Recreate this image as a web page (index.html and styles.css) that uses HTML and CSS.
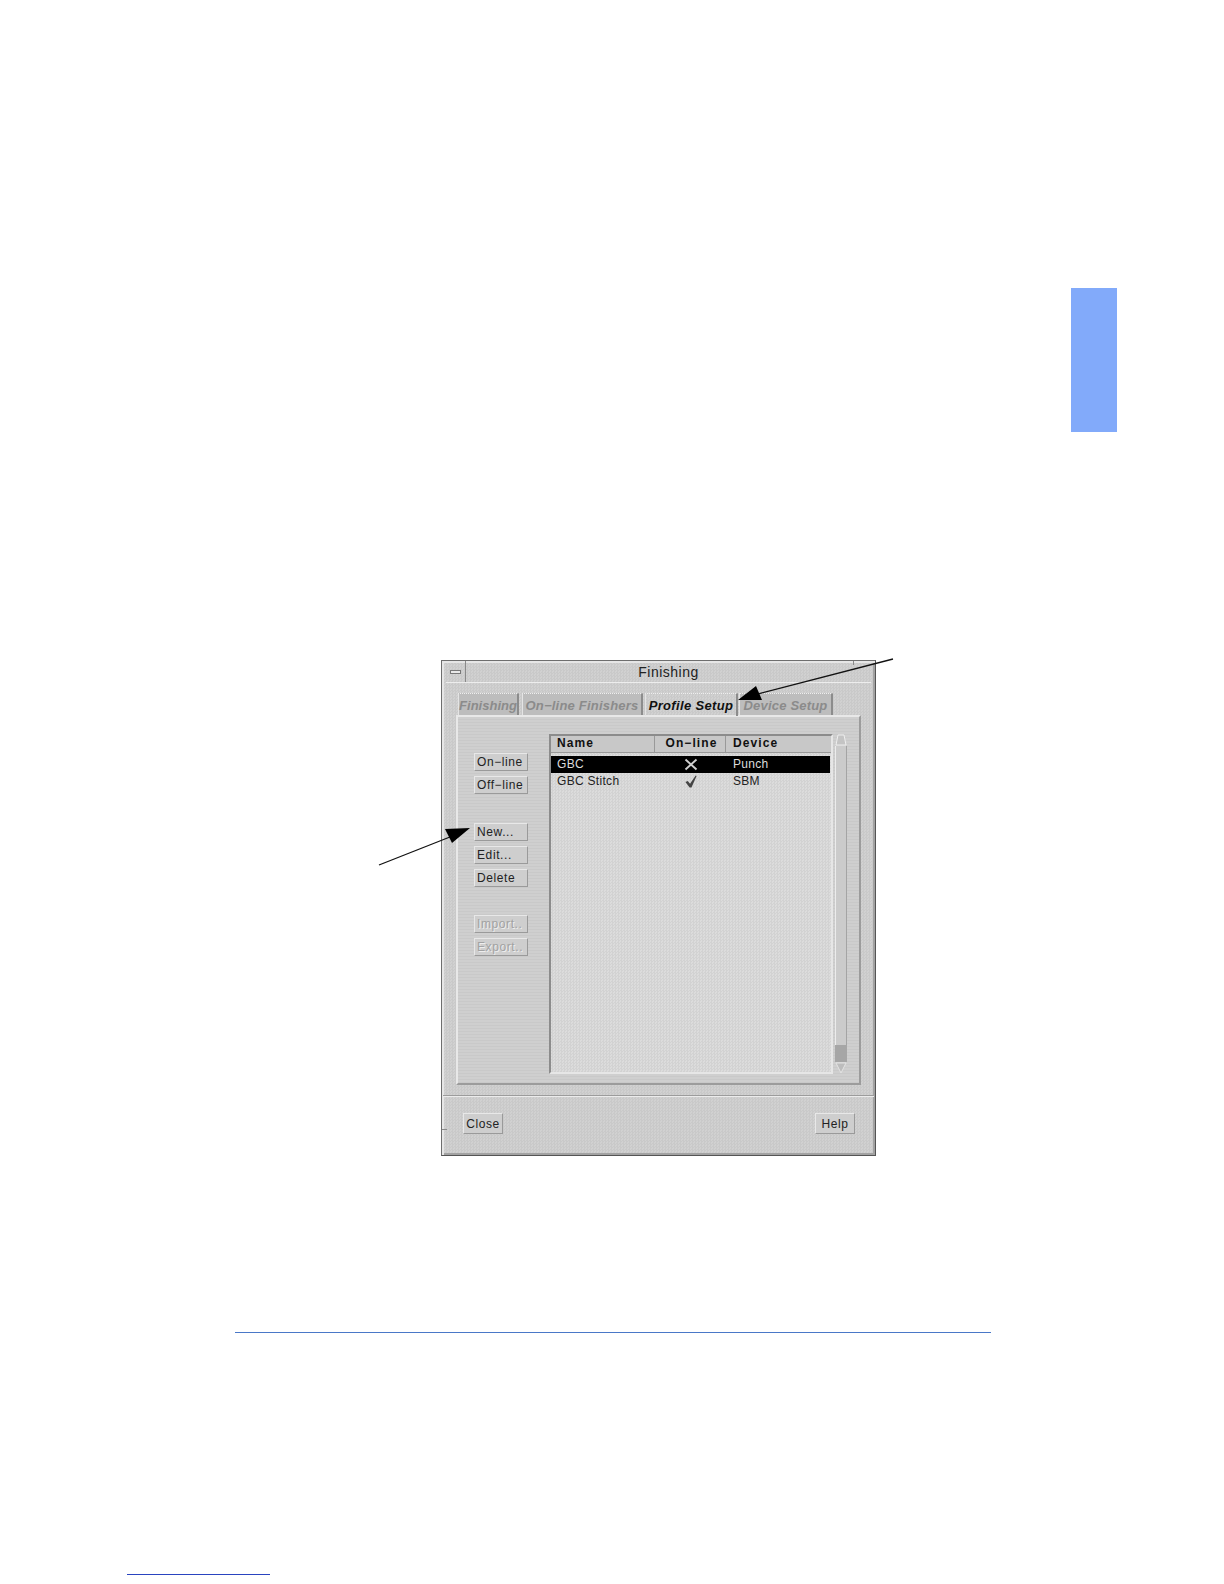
FILE: index.html
```html
<!DOCTYPE html>
<html lang="en">
<head>
<meta charset="utf-8">
<title>Finishing</title>
<link rel="stylesheet" href="styles.css">
</head>
<body>
<div class="page">
  <div class="side-tab"></div>
  <div class="dialog">
    <span class="tick tick-top"></span>
    <span class="tick tick-bottom"></span>
    <div class="titlebar">
      <div class="menu-btn"><span class="menu-dash"></span></div>
      <div class="title">Finishing</div>
    </div>
    <div class="tabs">
      <div class="tab off t1">Finishing</div>
      <div class="tab off t2">On&#8722;line Finishers</div>
      <div class="tab on t3">Profile Setup</div>
      <div class="tab off t4">Device Setup</div>
    </div>
    <div class="panel">
      <div class="actions">
        <div class="btn">On&#8722;line</div>
        <div class="btn">Off&#8722;line</div>
        <div class="btn gap">New...</div>
        <div class="btn">Edit...</div>
        <div class="btn">Delete</div>
        <div class="btn gap2 dis">Import..</div>
        <div class="btn dis">Export..</div>
      </div>
      <div class="list">
        <div class="row head">
          <div class="c1">Name</div><div class="c2">On&#8722;line</div><div class="c3">Device</div>
        </div>
        <div class="row sel">
          <div class="c1">GBC</div>
          <div class="c2"><svg class="ico" viewBox="0 0 14 12"><path d="M1.5 1 L12.5 11 M12.5 1 L1.5 11" stroke="#cfcfcf" stroke-width="1.9" fill="none"/></svg></div>
          <div class="c3">Punch</div>
        </div>
        <div class="row">
          <div class="c1">GBC Stitch</div>
          <div class="c2"><svg class="ico" viewBox="0 0 14 14"><path d="M1 7.5 L3.5 6.5 L6 9.5 L12 0.5 L13 1 L7.5 13.5 L5.5 13.5 Z" fill="#444"/></svg></div>
          <div class="c3">SBM</div>
        </div>
      </div>
      <div class="scroll">
        <svg class="arrow-btn" viewBox="0 0 12 12"><path d="M1 11 L3 1 L9 1 L11 11 Z" fill="#c4c4c4" stroke="#eee"/></svg>
        <div class="trough"></div>
        <div class="thumb"></div>
        <svg class="arrow-btn" viewBox="0 0 12 12"><path d="M1 1 L11 1 L6 11 Z" fill="#bdbdbd" stroke="#e4e4e4"/></svg>
      </div>
    </div>
    <div class="sep"></div>
    <div class="footer">
      <div class="btn wide">Close</div>
      <div class="btn wide">Help</div>
    </div>
  </div>
  <div class="rule"></div>
  <div class="foot-rule"></div>
  <svg class="arrows" viewBox="0 0 1224 1584">
    <path d="M893 659 L750 696" stroke="#111" stroke-width="1.3" fill="none"/>
    <path d="M738 700 L756 686 L762 700 Z" fill="#000"/>
    <path d="M379 865 L455 835" stroke="#111" stroke-width="1.3" fill="none"/>
    <path d="M470 828 L445 829 L452 843 Z" fill="#000"/>
  </svg>
</div>
</body>
</html>
```

FILE: styles.css
```css
* { box-sizing: border-box; }
html, body { margin: 0; padding: 0; background: #fff; }
.page {
  position: relative;
  width: 1224px;
  height: 1584px;
  overflow: hidden;
  padding-top: 288px;
  font-family: "Liberation Sans", Arial, sans-serif;
  color: #111;
}
.side-tab { width: 46px; height: 144px; margin-left: 1071px; background: #82aafa; }
.dialog {
  position: relative;
  width: 435px;
  height: 496px;
  margin: 228px 0 0 441px;
  border: 1px solid #6e6e6e;
  border-right-color: #555;
  border-bottom-color: #555;
  box-shadow: inset 2px 2px 0 #e6e6e6, inset -2px -2px 0 #a2a2a2;
  padding: 0 4px;
  background: repeating-conic-gradient(#c9c9c9 0 25%, #d1d1d1 0 50%) 0 0 / 3px 3px;
}
.tick { position: absolute; background: #8a8a8a; }
.tick-top { top: 0; right: 21px; width: 1px; height: 4px; }
.tick-bottom { left: 0; bottom: 25px; width: 5px; height: 1px; }
.titlebar {
  display: flex;
  height: 22px;
  border-bottom: 1px solid #ededed;
}
.menu-btn {
  width: 20px;
  display: flex;
  align-items: center;
  justify-content: center;
  border-right: 1px solid #8a8a8a;
}
.menu-dash { width: 11px; height: 4px; background: #e8e8e8; border: 1px solid #777; }
.title {
  flex: 1;
  text-align: center;
  font-size: 14px;
  line-height: 23px;
  letter-spacing: .5px;
  color: #222;
}
.tabs { display: flex; margin: 10px 0 0 12px; height: 22px; }
.tab {
  height: 22px;
  font-size: 13px;
  font-weight: bold;
  font-style: italic;
  line-height: 23px;
  text-align: center;
  white-space: nowrap;
  border-top: 1px dotted #eee;
  border-left: 1px solid #e4e4e4;
  border-right: 2px solid #8c8c8c;
  margin-right: 2px;
}
.tab.off { color: #8b8b8b; background: #bdbdbd; letter-spacing: .2px; }
.tab.on { color: #111; letter-spacing: .35px; }
.tab.t1 { width: 61px; margin-right: 3px; letter-spacing: 0; }
.t2 { width: 121px; }
.t3 { width: 93px; margin-right: 1px; height: 23px; }
.t4 { width: 94px; }
.panel {
  display: flex;
  align-items: flex-start;
  width: 405px;
  height: 370px;
  margin-left: 10px;
  padding: 17px 0 0 16px;
  border: 2px solid;
  border-color: #e8e8e8 #9c9c9c #9c9c9c #e8e8e8;
  background: repeating-linear-gradient(0deg, #c9c9c9 0 1px, #cfcfcf 1px 3px);
}
.actions { width: 54px; padding-top: 19px; margin-right: 21px; flex: none; }
.btn {
  width: 54px;
  height: 18px;
  margin-bottom: 5px;
  font-size: 12px;
  line-height: 17px;
  letter-spacing: .6px;
  padding-left: 2px;
  white-space: nowrap;
  background: #cecece;
  border: 1px solid;
  border-color: #e8e8e8 #9a9a9a #9a9a9a #e8e8e8;
  color: #222;
}
.btn.gap { margin-top: 29px; }
.btn.gap2 { margin-top: 28px; }
.btn.dis { color: #a2a2a2; text-shadow: 1px 1px 0 #eee; }
.list {
  width: 284px;
  height: 340px;
  flex: none;
  border: 2px solid;
  border-color: #8c8c8c #e6e6e6 #e6e6e6 #8c8c8c;
  background: repeating-conic-gradient(#d2d2d2 0 25%, #dcdcdc 0 50%) 0 0 / 3px 3px;
}
.row { display: flex; height: 17px; font-size: 12px; line-height: 17px; letter-spacing: .3px; color: #222; }
.head {
  height: 17px;
  margin-bottom: 3px;
  background: #c8c8c8;
  border-bottom: 1px solid #999;
  font-weight: bold;
  letter-spacing: 1.1px;
  line-height: 15px;
  color: #111;
}
.head .c1, .head .c2 { border-right: 1px solid #999; }
.head .c2 { padding-left: 3px; }
.head .c3 { flex: 1; }
.sel { background: #000; color: #dcdcdc; margin-right: 1px; }
.c1 { width: 104px; padding-left: 6px; }
.c2 { width: 71px; text-align: center; }
.c3 { padding-left: 7px; }
.ico { display: inline-block; width: 14px; height: 13px; margin-top: 2px; vertical-align: top; }
.scroll {
  width: 12px;
  height: 340px;
  margin-left: 2px;
  display: flex;
  flex-direction: column;
  flex: none;
}
.arrow-btn { width: 12px; height: 12px; flex: none; }
.trough { flex: 1; border: solid #a4a4a4; border-width: 0 1px; border-left-color: #ececec; background: #cbcbcb; }
.thumb { height: 17px; background: #a6a6a6; flex: none; }
.sep { height: 1px; margin: 10px -3px 0; background: #9c9c9c; box-shadow: 0 1px 0 #ececec; }
.footer { display: flex; justify-content: space-between; padding: 17px 16px 0 17px; }
.btn.wide { width: 40px; height: 21px; line-height: 20px; padding-left: 0; text-align: center; margin: 0; }
.rule { width: 756px; height: 1px; margin: 176px 0 0 235px; background: #4a78c8; }
.foot-rule { width: 143px; height: 1px; margin: 241px 0 0 127px; background: #2a44c0; }
.arrows { position: absolute; left: 0; top: 0; width: 1224px; height: 1584px; pointer-events: none; }
```
